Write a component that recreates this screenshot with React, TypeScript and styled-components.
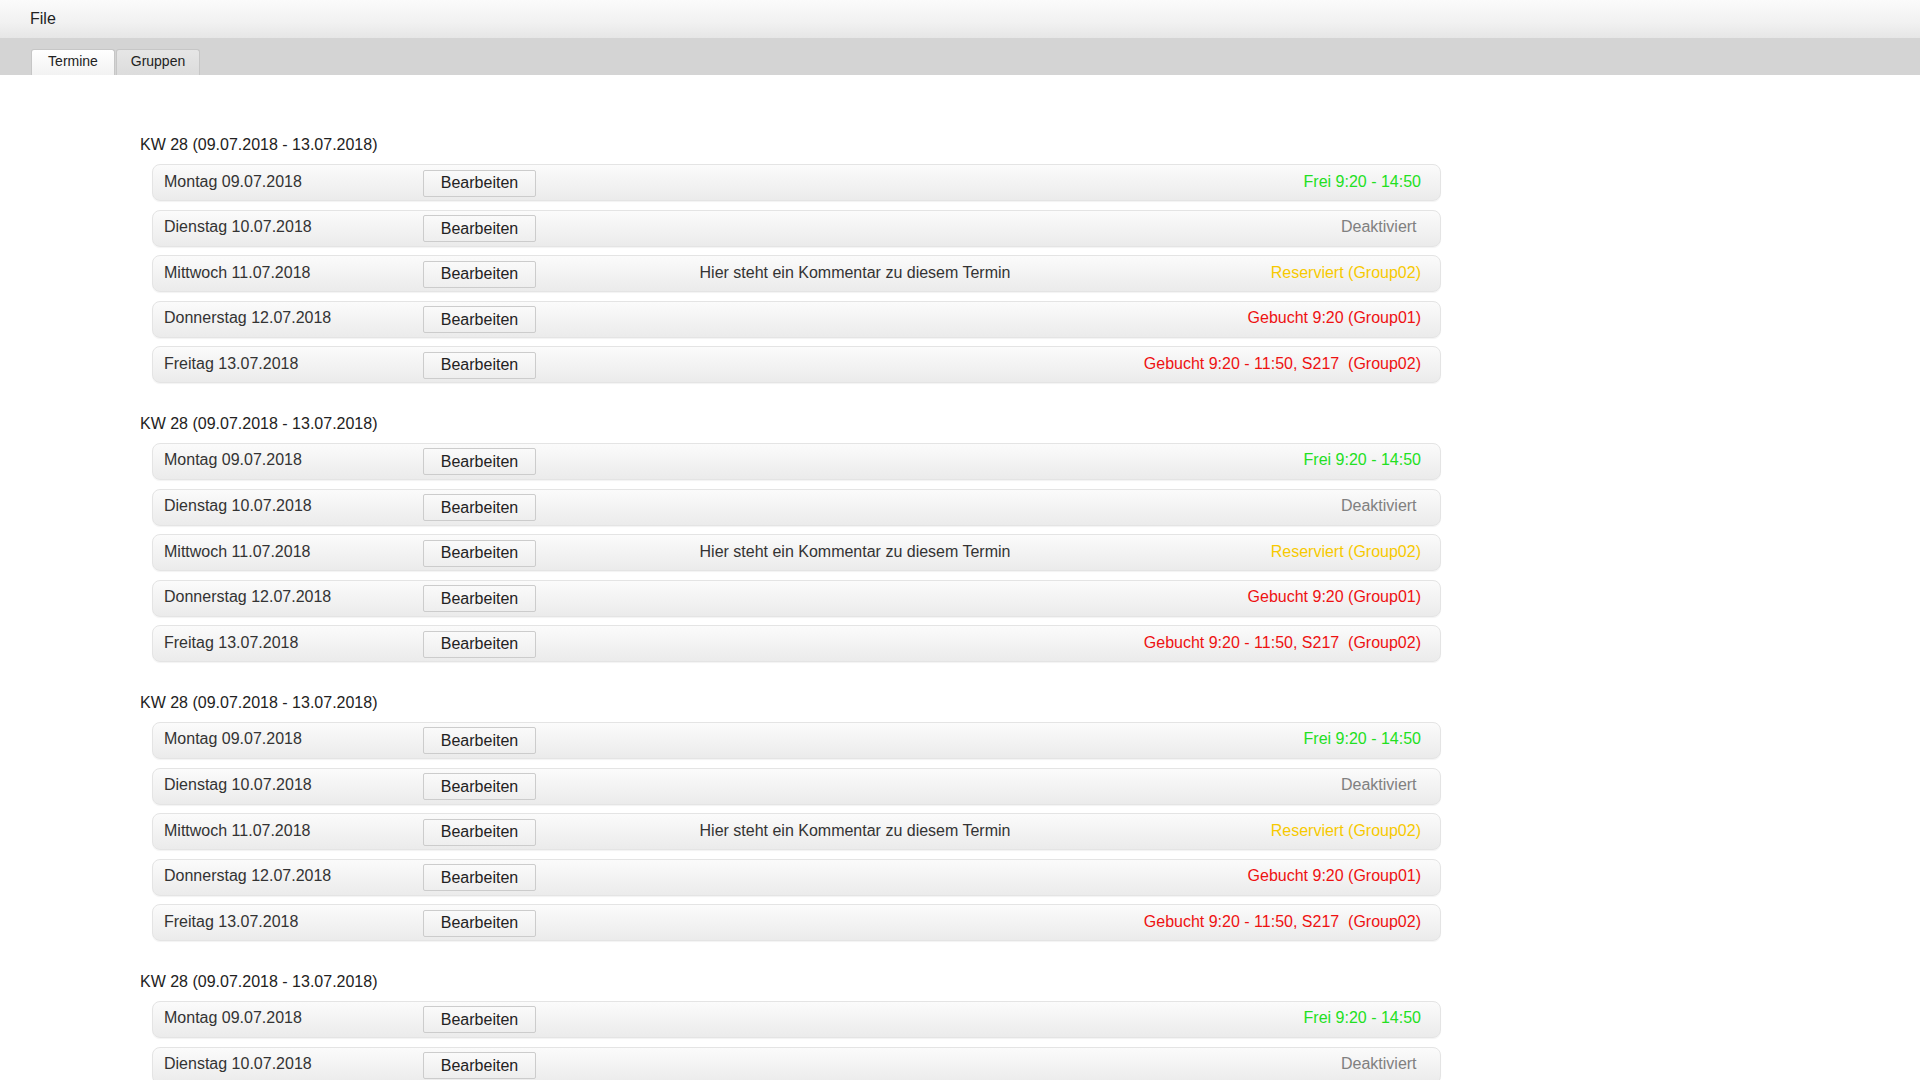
import React from "react";
import styled, { createGlobalStyle } from "styled-components";

const GlobalStyle = createGlobalStyle`
  html, body {
    margin: 0;
    padding: 0;
    background: #ffffff;
    font-family: "Liberation Sans", Arial, sans-serif;
    color: #333333;
  }
  * { box-sizing: border-box; }
`;

const MenuBar = styled.div`
  height: 38px;
  display: flex;
  align-items: center;
  padding-left: 30px;
  background: linear-gradient(to bottom, #fbfbfb 0%, #f1f1f1 60%, #e6e6e6 100%);
`;

const MenuItem = styled.span`
  font-size: 16px;
  color: #222;
  margin-top: -1px;
`;

const TabBar = styled.div`
  height: 37px;
  background: #d4d4d4;
  display: flex;
  align-items: flex-end;
  padding-left: 31px;
  gap: 1px;
`;

const Tab = styled.button<{ $active?: boolean }>`
  width: 84px;
  height: 26px;
  border: 1px solid #c6c6c6;
  border-bottom: none;
  border-radius: 3px 3px 0 0;
  font-family: "Liberation Sans", Arial, sans-serif;
  font-size: 14px;
  color: #222;
  padding: 0 0 3px 0;
  background: ${(p) =>
    p.$active
      ? "linear-gradient(to bottom, #ffffff 0%, #f2f2f2 100%)"
      : "linear-gradient(to bottom, #e6e6e6 0%, #dcdcdc 100%)"};
`;

const Content = styled.div`
  padding: 60px 0 0 140px;
`;

const Section = styled.section`
  padding-bottom: 22px;
`;

const SectionTitle = styled.div`
  font-size: 16px;
  line-height: 20px;
  color: #222;
  margin-bottom: 9px;
`;

const RowList = styled.div`
  margin-left: 12px;
  width: 1289px;
  display: flex;
  flex-direction: column;
  gap: 8.6px;
  margin-bottom: 8.6px;
`;

const Row = styled.div`
  height: 37px;
  display: grid;
  grid-template-columns: 259px 113px 1fr 240px;
  align-items: center;
  padding: 0 19px 0 11px;
  border: 1px solid #e4e4e4;
  border-radius: 8px;
  background: linear-gradient(to bottom, #fbfbfb 0%, #f3f3f3 50%, #ebebeb 100%);
  box-shadow: 0 1px 1px rgba(0, 0, 0, 0.05);
`;

const DateText = styled.span`
  font-size: 16px;
  color: #333;
  margin-top: -2px;
`;

const EditButton = styled.button`
  width: 113px;
  height: 27px;
  margin-top: 1px;
  border: 1px solid #cccccc;
  border-radius: 2px;
  background: linear-gradient(to bottom, #fafafa 0%, #eeeeee 100%);
  font-family: "Liberation Sans", Arial, sans-serif;
  font-size: 16px;
  color: #222;
  padding: 0;
`;

const Comment = styled.span`
  font-size: 16px;
  color: #333;
  text-align: center;
  padding-right: 7px;
  margin-top: -1px;
`;

const Status = styled.span<{ $color: string }>`
  display: flex;
  justify-content: flex-end;
  white-space: pre;
  font-size: 16px;
  color: ${(p) => p.$color};
  margin-top: -2px;
`;

type Entry = {
  date: string;
  comment?: string;
  status: string;
  color: string;
};

const entries: Entry[] = [
  { date: "Montag 09.07.2018", status: "Frei 9:20 - 14:50", color: "#22e022" },
  { date: "Dienstag 10.07.2018", status: "Deaktiviert ", color: "#808080" },
  {
    date: "Mittwoch 11.07.2018",
    comment: "Hier steht ein Kommentar zu diesem Termin",
    status: "Reserviert (Group02)",
    color: "#f7c900",
  },
  { date: "Donnerstag 12.07.2018", status: "Gebucht 9:20 (Group01)", color: "#ee1111" },
  {
    date: "Freitag 13.07.2018",
    status: "Gebucht 9:20 - 11:50, S217  (Group02)",
    color: "#ee1111",
  },
];

const weeks = [0, 1, 2, 3];

export default function App() {
  return (
    <>
      <GlobalStyle />
      <MenuBar>
        <MenuItem>File</MenuItem>
      </MenuBar>
      <TabBar>
        <Tab $active>Termine</Tab>
        <Tab>Gruppen</Tab>
      </TabBar>
      <Content>
        {weeks.map((w) => (
          <Section key={w}>
            <SectionTitle>KW 28 (09.07.2018 - 13.07.2018)</SectionTitle>
            <RowList>
              {entries.map((e) => (
                <Row key={e.date}>
                  <DateText>{e.date}</DateText>
                  <EditButton>Bearbeiten</EditButton>
                  <Comment>{e.comment ?? ""}</Comment>
                  <Status $color={e.color}>{e.status}</Status>
                </Row>
              ))}
            </RowList>
          </Section>
        ))}
      </Content>
    </>
  );
}
